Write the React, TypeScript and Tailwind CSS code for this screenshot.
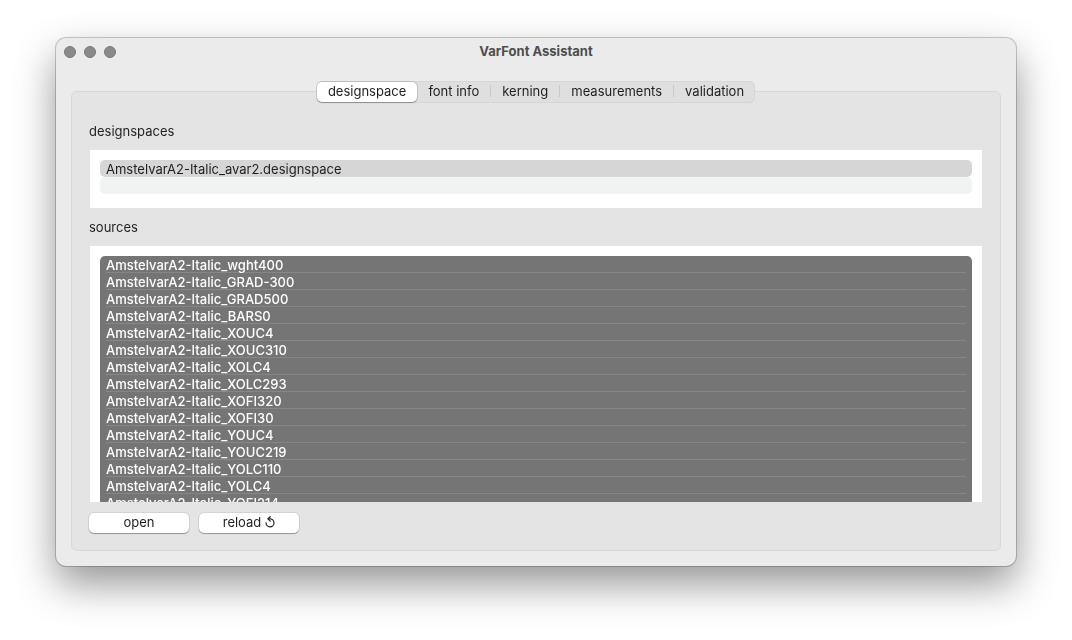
import { useState } from "react";
import type { ReactNode } from "react";
import clsx from "clsx";

const TABS = ["designspace", "font info", "kerning", "measurements", "validation"];

const DESIGNSPACES = ["AmstelvarA2-Italic_avar2.designspace"];

const SOURCES = [
  "wght400",
  "GRAD-300",
  "GRAD500",
  "BARS0",
  "XOUC4",
  "XOUC310",
  "XOLC4",
  "XOLC293",
  "XOFI320",
  "XOFI30",
  "YOUC4",
  "YOUC219",
  "YOLC110",
  "YOLC4",
  "YOFI214",
].map((name) => `AmstelvarA2-Italic_${name}`);

function ReloadIcon() {
  return (
    <svg
      viewBox="0 0 10 12"
      className="h-3 w-2.5"
      fill="none"
      stroke="currentColor"
      strokeWidth="1.2"
      strokeLinecap="round"
      strokeLinejoin="round"
      aria-hidden="true"
    >
      <path d="M5.2 0.7 3 2.8l2.2 2.3" />
      <path d="M3.2 2.8H5.2a4 4 0 1 1-4.2 4" />
    </svg>
  );
}

function TitleBar() {
  return (
    <header className="relative flex h-7 items-center justify-center">
      <div className="absolute left-2 flex gap-2">
        {["Close", "Minimize", "Zoom"].map((label) => (
          <button
            key={label}
            type="button"
            aria-label={label}
            className="size-3 rounded-full border border-[#7a7a7a] bg-[#8a8a8a]"
          />
        ))}
      </div>
      <h1 className="pb-0.5 font-bold text-[#4d4d4d]">VarFont Assistant</h1>
    </header>
  );
}

function Tabs({ active, onChange }: { active: number; onChange: (i: number) => void }) {
  return (
    <div
      role="tablist"
      className="mx-auto -mt-[11px] flex h-[22px] w-fit rounded-md bg-[#dfdfdf] py-px ring-1 ring-[#d6d6d6] ring-inset"
    >
      {TABS.map((tab, i) => (
        <button
          key={tab}
          type="button"
          role="tab"
          aria-selected={i === active}
          onClick={() => onChange(i)}
          className={clsx(
            "flex items-center pb-0.5",
            i === active &&
              "rounded-[5px] bg-white px-[11px] shadow-[0_0_0_1px_rgba(0,0,0,0.12),0_1px_1px_rgba(0,0,0,0.25)]",
          )}
        >
          {i === active ? (
            tab
          ) : (
            <span
              className={clsx(
                "px-[11px] leading-3",
                i < TABS.length - 1 && i + 1 !== active && "border-r border-[#c9c9c9]",
              )}
            >
              {tab}
            </span>
          )}
        </button>
      ))}
    </div>
  );
}

function PushButton({ children }: { children: ReactNode }) {
  return (
    <button
      type="button"
      className="flex h-5 w-[100px] items-center justify-center gap-1 rounded-[5px] bg-white pb-0.5 shadow-[0_0_0_1px_rgba(0,0,0,0.07),0_1px_1px_rgba(0,0,0,0.3)]"
    >
      {children}
    </button>
  );
}

export default function App() {
  const [tab, setTab] = useState(0);

  return (
    <div className="min-h-screen bg-white px-14 pt-[38px] pb-[73px] font-['Inter','Liberation_Sans',sans-serif] text-[13px] leading-5 text-[#1f1f1f]">
      <main className="rounded-[10px] bg-[#ebebeb] px-[15px] pb-[15px] shadow-[0_0_0_1px_rgba(0,0,0,0.2),0_18px_40px_rgba(0,0,0,0.42)]">
        <div className="-mx-[15px]">
          <TitleBar />
        </div>
        <div className="mt-[25px] rounded-md border border-[#d8d8d8] bg-[#e4e4e4] px-[17px] pb-[17px]">
          <Tabs active={tab} onChange={setTab} />

          <h2 id="designspaces" className="mt-[18px]">
            designspaces
          </h2>
          <ul
            role="listbox"
            aria-labelledby="designspaces"
            className="mx-px mt-[9px] bg-white px-2.5 pt-2.5 pb-3.5"
          >
            {DESIGNSPACES.map((name) => (
              <li
                key={name}
                role="option"
                aria-selected="true"
                className="rounded-[5px] bg-[#d6d6d6] px-1.5 pt-0.5 leading-[15px]"
              >
                {name}
              </li>
            ))}
            <li role="presentation" className="h-[17px] rounded-[5px] bg-[#f1f3f3]" />
          </ul>

          <h2 id="sources" className="mt-[9px]">
            sources
          </h2>
          <div className="mx-px mt-[9px] h-64 overflow-y-auto bg-white px-2.5 pt-2.5 [scrollbar-width:none]">
            <ul
              role="listbox"
              aria-labelledby="sources"
              aria-multiselectable="true"
              className="rounded-[5px] bg-[#757575] px-1.5 font-medium text-white"
            >
              {SOURCES.map((name) => (
                <li
                  key={name}
                  role="option"
                  aria-selected="true"
                  className="border-b border-[#868686] pt-0.5 leading-[14px]"
                >
                  {name}
                </li>
              ))}
            </ul>
          </div>

          <div className="mt-[11px] flex gap-2.5">
            <PushButton>open</PushButton>
            <PushButton>
              reload <ReloadIcon />
            </PushButton>
          </div>
        </div>
      </main>
    </div>
  );
}
